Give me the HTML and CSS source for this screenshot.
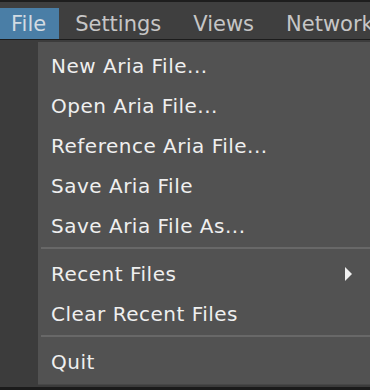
FILE: index.html
```html
<!DOCTYPE html>
<html lang="en">
<head>
 <meta charset="UTF-8">
 <meta name="viewport" content="width=device-width, initial-scale=1.0">
 <title>Aria - File menu</title>
 <link rel="stylesheet" href="styles.css">
</head>
<body>
 <div class="window">
 <div class="menubar">
 <div class="menubar-item active">File</div>
 <div class="menubar-item">Settings</div>
 <div class="menubar-item">Views</div>
 <div class="menubar-item">Network</div>
 </div>
 <div class="workspace">
 <div class="menu">
 <div class="menu-item">New Aria File...</div>
 <div class="menu-item">Open Aria File...</div>
 <div class="menu-item">Reference Aria File...</div>
 <div class="menu-item">Save Aria File</div>
 <div class="menu-item">Save Aria File As...</div>
 <div class="separator"></div>
 <div class="menu-item submenu">Recent Files <span class="arrow"></span></div>
 <div class="menu-item">Clear Recent Files</div>
 <div class="separator"></div>
 <div class="menu-item">Quit</div>
 </div>
 </div>
 </div>
</body>
</html>
```
FILE: styles.css
```css
* {
margin: 0;
padding: 0;
box-sizing: border-box;
}

body {
width: 370px;
height: 390px;
overflow: hidden;
background: #1b1b1b;
font-family: 'DejaVu Sans', Verdana, sans-serif;
}

.window {
height: 387px;
background: #3c3c3c;
border-top: 2px solid #1e1e1e;
display: flex;
flex-direction: column;
}

.menubar {
height: 38px;
display: flex;
align-items: flex-end;
background: #3f3f3f;
border-bottom: 1px solid #1c1c1c;
white-space: nowrap;
overflow: hidden;
}

.menubar-item {
height: 31px;
padding: 2px 16px 0;
line-height: 29px;
font-size: 21px;
color: #c6c6c6;
}

.menubar-item:first-child {
padding-left: 11px;
padding-right: 13px;
}

.menubar-item.active {
background: #4a7ea6;
color: #d2dbe2;
}

.workspace {
flex: 1;
padding: 2px 0 2px 38px;
display: flex;
}

.menu {
flex: 1;
background: #525252;
border-bottom: 1px solid #474747;
padding-top: 4px;
}

.menu-item {
height: 40px;
display: flex;
align-items: center;
padding-left: 13px;
padding-right: 18px;
font-size: 20px;
letter-spacing: 0.5px;
color: #efefef;
}

.menu-item.submenu {
justify-content: space-between;
}

.arrow {
width: 0;
height: 0;
border-top: 7px solid transparent;
border-bottom: 7px solid transparent;
border-left: 7px solid #f0f0f0;
}

.separator {
height: 2px;
margin: 1px 0 5px 3px;
background: #686868;
}
```
